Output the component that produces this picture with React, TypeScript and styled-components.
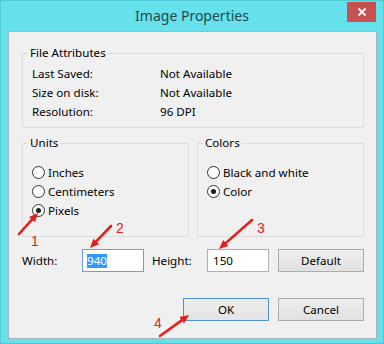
import React from "react";
import styled, { createGlobalStyle } from "styled-components";

const Global = createGlobalStyle`
  html, body { margin: 0; padding: 0; background: #66e1eb; }
  body { font-family: "Segoe UI", "Noto Sans", sans-serif; }
`;

const UI_FONT = `"Segoe UI", "Noto Sans", "Liberation Sans", sans-serif`;

const Window = styled.div`
  position: relative;
  width: 384px;
  height: 344px;
  box-sizing: border-box;
  background: #66e1eb;
  box-shadow: inset 0 0 0 1px #4fc9d4;
  display: flex;
  flex-direction: column;
  font-family: ${UI_FONT};
  font-size: 11.6px;
  color: #000;
  overflow: hidden;
`;

const TitleBar = styled.div`
  position: relative;
  height: 31px;
  flex: none;
  display: flex;
  align-items: center;
  justify-content: center;
`;

const Title = styled.div`
  font-size: 14px;
  color: #234a50;
  line-height: 20px;
  padding-top: 1px;
`;

const CloseButton = styled.div`
  position: absolute;
  top: 2px;
  right: 8px;
  width: 29px;
  height: 20px;
  background: #c75050;
  display: flex;
  align-items: center;
  justify-content: center;
`;

const Client = styled.div`
  flex: 1;
  margin: 0 7px 5px 8px;
  background: #f0f0f0;
  border: 1px solid #a3b8bc;
  padding: 13px 12px 0 13px;
  display: flex;
  flex-direction: column;
`;

const Group = styled.fieldset<{ $pad: string }>`
  margin: 0;
  min-width: 0;
  border: 1px solid #dcdcdc;
  padding: ${(p) => p.$pad};
`;

const Legend = styled.legend`
  padding: 0 2px;
  margin-left: -4px;
  line-height: 16px;
`;

const AttrGrid = styled.div`
  display: grid;
  grid-template-columns: 128px auto;
  grid-auto-rows: 19px;
  align-items: center;
`;

const Cell = styled.div`
  line-height: 19px;
  white-space: nowrap;
`;

const TwoCols = styled.div`
  display: grid;
  grid-template-columns: 167px 167px;
  column-gap: 8px;
  margin-top: 7px;
`;

const RadioRow = styled.div`
  display: flex;
  align-items: center;
  height: 19px;
  gap: 3px;
`;

const RadioCircle = styled.span<{ $on?: boolean }>`
  width: 13px;
  height: 13px;
  box-sizing: border-box;
  border-radius: 50%;
  border: 1px solid #333;
  background: radial-gradient(circle at 50% 40%, #ffffff 55%, #ececec 100%);
  display: flex;
  align-items: center;
  justify-content: center;
  flex: none;
  &::after {
    content: "";
    display: ${(p) => (p.$on ? "block" : "none")};
    width: 5px;
    height: 5px;
    border-radius: 50%;
    background: #1c1c1c;
  }
`;

const FieldsRow = styled.div`
  display: grid;
  grid-template-columns: 60px 62px 63px 62px 95px;
  align-items: center;
  margin-top: 12px;
  height: 23px;
`;

const FieldLabel = styled.div<{ $indent?: number }>`
  padding-left: ${(p) => p.$indent ?? 0}px;
  white-space: nowrap;
`;

const Field = styled.div<{ $focus?: boolean }>`
  height: 23px;
  box-sizing: border-box;
  background: #fff;
  border: 1px solid ${(p) => (p.$focus ? "#6d9edb" : "#b0b0b0")};
  display: flex;
  align-items: center;
  padding-left: ${(p) => (p.$focus ? 4 : 5)}px;
  line-height: 14px;
`;

const Selected = styled.span`
  background: #3399ff;
  color: #fff;
  line-height: 14px;
`;

const Button = styled.div<{ $default?: boolean }>`
  width: 86px;
  height: 23px;
  box-sizing: border-box;
  border: 1px solid ${(p) => (p.$default ? "#4f92d8" : "#acacac")};
  background: ${(p) =>
    p.$default ? "linear-gradient(#ececec, #e5e5e5)" : "linear-gradient(#eeeeee, #e1e1e1)"};
  display: flex;
  align-items: center;
  justify-content: center;
  justify-self: end;
`;

const ButtonRow = styled.div`
  display: flex;
  justify-content: flex-end;
  gap: 9px;
  margin-top: 26px;
`;

const Overlay = styled.svg`
  position: absolute;
  left: 0;
  top: 0;
  pointer-events: none;
`;

const Marker = styled.text`
  font-family: "Liberation Sans", Arial, sans-serif;
  font-size: 14px;
  fill: #e3201b;
`;

function Arrow({ x1, y1, x2, y2 }: { x1: number; y1: number; x2: number; y2: number }) {
  const dx = x2 - x1;
  const dy = y2 - y1;
  const len = Math.hypot(dx, dy);
  const ux = dx / len;
  const uy = dy / len;
  const hl = 9;
  const hw = 4;
  const bx = x2 - ux * hl;
  const by = y2 - uy * hl;
  const pts = [
    `${x2},${y2}`,
    `${bx - uy * hw},${by + ux * hw}`,
    `${bx + uy * hw},${by - ux * hw}`,
  ].join(" ");
  return (
    <g>
      <line x1={x1} y1={y1} x2={bx + ux * 2} y2={by + uy * 2} stroke="#e3201b" strokeWidth={2.6} strokeLinecap="round" />
      <polygon points={pts} fill="#e3201b" />
    </g>
  );
}

const attrs: [string, string][] = [
  ["Last Saved:", "Not Available"],
  ["Size on disk:", "Not Available"],
  ["Resolution:", "96 DPI"],
];

export default function App() {
  return (
    <>
      <Global />
      <Window>
        <TitleBar>
          <Title>Image Properties</Title>
          <CloseButton>
            <svg width="10" height="10" viewBox="0 0 10 10">
              <path d="M1.5 1.5 L8.5 8.5 M8.5 1.5 L1.5 8.5" stroke="#fff" strokeWidth="1.8" />
            </svg>
          </CloseButton>
        </TitleBar>
        <Client>
          <Group $pad="3px 0 6px 9px">
            <Legend>File Attributes</Legend>
            <AttrGrid>
              {attrs.map(([k, v]) => (
                <React.Fragment key={k}>
                  <Cell>{k}</Cell>
                  <Cell>{v}</Cell>
                </React.Fragment>
              ))}
            </AttrGrid>
          </Group>
          <TwoCols>
            <Group $pad="12px 0 16px 9px">
              <Legend>Units</Legend>
              <RadioRow>
                <RadioCircle />
                Inches
              </RadioRow>
              <RadioRow>
                <RadioCircle />
                Centimeters
              </RadioRow>
              <RadioRow>
                <RadioCircle $on />
                Pixels
              </RadioRow>
            </Group>
            <Group $pad="12px 0 16px 9px">
              <Legend>Colors</Legend>
              <RadioRow>
                <RadioCircle />
                Black and white
              </RadioRow>
              <RadioRow>
                <RadioCircle $on />
                Color
              </RadioRow>
            </Group>
          </TwoCols>
          <FieldsRow>
            <FieldLabel>Width:</FieldLabel>
            <Field $focus>
              <Selected>940</Selected>
            </Field>
            <FieldLabel $indent={8}>Height:</FieldLabel>
            <Field>150</Field>
            <Button>Default</Button>
          </FieldsRow>
          <ButtonRow>
            <Button $default>OK</Button>
            <Button>Cancel</Button>
          </ButtonRow>
        </Client>
        <Overlay width="384" height="344" viewBox="0 0 384 344">
          <Arrow x1={19} y1={234} x2={38} y2={213} />
          <Arrow x1={111} y1={226} x2={90} y2={248} />
          <Arrow x1={252} y1={220} x2={219} y2={249} />
          <Arrow x1={160} y1={336} x2={189} y2={315} />
          <Marker x={31} y={246}>1</Marker>
          <Marker x={116} y={233}>2</Marker>
          <Marker x={257} y={233}>3</Marker>
          <Marker x={154} y={328}>4</Marker>
        </Overlay>
      </Window>
    </>
  );
}
